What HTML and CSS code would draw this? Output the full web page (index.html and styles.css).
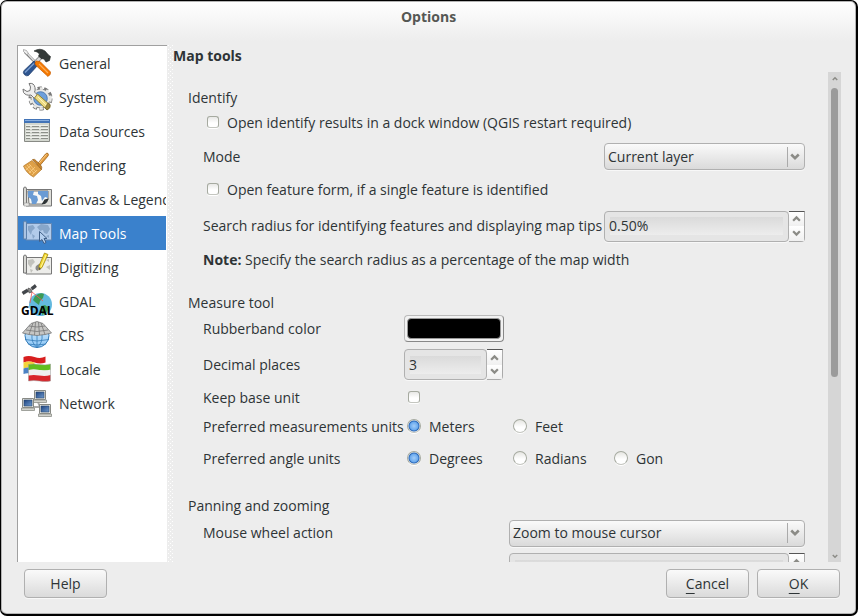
FILE: index.html
```html
<!DOCTYPE html>
<html lang="en">
<head>
<meta charset="utf-8">
<meta name="viewport" content="width=device-width, initial-scale=1">
<title>Options</title>
<link rel="stylesheet" href="styles.css">
</head>
<body>
<svg class="defs" aria-hidden="true">
  <defs>
    <linearGradient id="screen" x1="0" y1="0" x2="1" y2="1"><stop offset="0" stop-color="#1d417c"/><stop offset="1" stop-color="#6f9bd0"/></linearGradient>
    <linearGradient id="globe" x1="0" y1="0" x2="0" y2="1"><stop offset="0" stop-color="#dcf0ff"/><stop offset="1" stop-color="#8cc6f5"/></linearGradient>
    <symbol id="chev-up" viewBox="0 0 8 6"><path d="M1 5l3-3 3 3" fill="none" stroke="#8b8b86" stroke-width="2"/></symbol>
    <symbol id="chev-down" viewBox="0 0 8 6"><path d="M1 1l3 3 3-3" fill="none" stroke="#8b8b86" stroke-width="2"/></symbol>
  </defs>
</svg>
<div class="window">
  <header class="titlebar"><h1>Options</h1></header>
  <div class="body">
    <nav class="sidebar">
      <a class="item" href="#general">
        <svg class="icon" viewBox="0 0 30 30"><path d="M3 4l11 11" stroke="#777" stroke-width="2.600"/><path d="M3 3l11 12" stroke="#dcdcdc" stroke-width="1.600"/><path d="M1.500 1.500l3 1 2 3-2 1-3-3z" fill="#eee" stroke="#888" stroke-width=".6"/><path d="M19 9l-7 7" stroke="#777" stroke-width="4"/><path d="M19 9l-7 7" stroke="#d8d8d8" stroke-width="2.600"/><path d="M12 13l4 4L6.500 27.500q-2 1-4-.8-2-2-.6-4z" fill="#2e5590" stroke="#1d3b68" stroke-width=".7"/><path d="M12 15.500L3 24.500" stroke="#7c9fce" stroke-width="1.500"/><path d="M14 13l4 .5L28.500 24q.5 2.500-2.500 4.500L14 17.500q-2-2 0-4.500z" fill="#f57900" stroke="#c65a00" stroke-width=".7"/><path d="M17 16l9 9" stroke="#ffae58" stroke-width="1.300"/><path d="M12 3q6-3.500 11 0l3.500 4 2 1.500-1 4-3.500 1.500-2-3-3-.5-2.500-2.500 1-2q-2-2.500-5.500-3z" fill="#343a38" stroke="#1d2220" stroke-width=".6"/></svg>
        <span>General</span></a>
      <a class="item" href="#system">
        <svg class="icon" viewBox="0 0 30 30"><circle cx="18.500" cy="16.500" r="10.500" fill="none" stroke="#777" stroke-width="3" stroke-dasharray="4.200 2.400"/><circle cx="18.500" cy="16.500" r="9.500" fill="#e9e9e7" stroke="#888" stroke-width="1"/><circle cx="18.500" cy="16.500" r="10" fill="none" stroke="#e9e9e7" stroke-width="2.600" stroke-dasharray="3.200 3.400"/><circle cx="18.500" cy="16.500" r="6.800" fill="#6d9fdb" stroke="#3d6da8" stroke-width=".8"/><path d="M7 1.500q5-1 6 4 .5 3-.5 4.500l4 4-3.500 3-4-4q-5 1-7.500-2.500l-.500-3.500 4 2.500 3-1 .5-3.500z" fill="#eee" stroke="#777" stroke-width="1"/><path d="M15.500 12l12.500 11q1 3-3 5L12.500 16z" fill="#eddb83" stroke="#8c7a28" stroke-width=".9"/><path d="M16 15l9 9" stroke="#fff4b8"/><path d="M28 22q1 4-3 6l-2-2 3-5z" fill="#9b8539" stroke="#665a30" stroke-width=".6"/></svg>
        <span>System</span></a>
      <a class="item" href="#data-sources">
        <svg class="icon" viewBox="0 0 30 30"><path d="M2.500 3.500h25v22h-25z" fill="#d3d7cf" stroke="#888a85"/><path d="M2 3h26v4H2z" fill="#4374b7"/><path d="M3 4.500h24" stroke="#87aee0"/><path d="M4 9.500h22M4 12.500h22M4 15.500h22M4 18.500h22M4 21.500h22" stroke="#eff0ec"/><path d="M4 10.500h4m2 0h7m2 0h7M4 13.500h4m2 0h7m2 0h7M4 16.500h4m2 0h7m2 0h7M4 19.500h4m2 0h7m2 0h7M4 22.500h4m2 0h7m2 0h7" stroke="#8c8f89"/></svg>
        <span>Data Sources</span></a>
      <a class="item" href="#rendering">
        <svg class="icon" viewBox="0 0 30 30"><path d="M15 14.500L23.500 4q1.500-1.500 2.500-.5t0 2.500L17.500 16z" fill="#e39b3e" stroke="#a0641b" stroke-width=".8"/><path d="M17 13l7.500-8.500" stroke="#ffd28c"/><path d="M10 10.500l9.500 9-8 7.500Q4 23 1.500 16z" fill="#dea047" stroke="#b37524" stroke-width=".7"/><path d="M3 16.500l6 6.500M5 15l7 8M7 14l7 8M4 20l5-5M7 23l6-6M10 25l5-5" stroke="#ffd48c" stroke-width=".7"/><path d="M10.500 9.500q2-1 4 1.500l4 4q2 2 1 4.500z" fill="#c98429" stroke="#95601d" stroke-width=".7"/></svg>
        <span>Rendering</span></a>
      <a class="item" href="#canvas">
        <svg class="icon" viewBox="0 0 30 30"><path d="M4 5.500h25.500v16.500H4z" fill="#deded9" stroke="#777"/><path d="M6 7h20v9l-6 4H7z" fill="#f8f8f6" stroke="#555" stroke-width=".8"/><path d="M6 7h6l-1 4 4 1 1 4-2 4h-4l-1-5-3-2zM16 7h10v7l-3-1-3 4-1-5-3-2z" fill="#6a9bd4"/><path d="M26.500 14.500l-4 1-3 5 3.500-.5q3-2 3.500-5.500z" fill="#2e3436"/><path d="M1.500 5q0-2 1.500-2t1.500 2v16h-3z" fill="#d9d9d5" stroke="#777"/><path d="M2 19h5v3H2z" fill="#e6e6e3" stroke="#999" stroke-width=".6"/></svg>
        <span>Canvas &amp; Legend</span></a>
      <a class="item selected" href="#map-tools" aria-current="page">
        <svg class="icon" viewBox="0 0 30 30"><path d="M4 5.500h25.500v16.500H4z" fill="#b2cbea" stroke="#6386b2"/><path d="M6 8l5-1 2 3-3 3-1 4-3-5zM15 9l4-3 7 1 2 4-3 5-3-1-1-3-3 1zM10 16l3 2-2 3zM24 18l3-1v3z" fill="#88a6c9"/><path d="M1.500 5q0-2 1.500-2t1.500 2v16h-3z" fill="#abc4e3" stroke="#5e82ad"/><path d="M17.500 13.500v10l2.500-2 2 4 2-1-2-4h3z" fill="#b6d0ef" stroke="#405f88" stroke-width="1"/></svg>
        <span>Map Tools</span></a>
      <a class="item" href="#digitizing">
        <svg class="icon" viewBox="0 0 30 30"><path d="M4 5.500h25.500v16.500H4z" fill="#ededea" stroke="#777"/><path d="M6 8l5-1 2 3-3 3-1 3-3-4zM8 17l3 1-2 3zM24 15l4-2v5zM24 8l3-1v3z" fill="#c2c2bd"/><path d="M14 18q-2-4 3-6l3-1-2 4-2 4z" fill="#888"/><path d="M1.500 5q0-2 1.500-2t1.500 2v16h-3z" fill="#d9d9d5" stroke="#777"/><path d="M22.500 1l3.500 1.500-6 13-3 2.500v-4z" fill="#f4da35" stroke="#a48a0c" stroke-width=".8"/><path d="M24 3l-5 12" stroke="#fff49b"/><path d="M17 15v3l2-1z" fill="#555"/></svg>
        <span>Digitizing</span></a>
      <a class="item" href="#gdal">
        <svg class="icon" viewBox="0 0 30 30"><circle cx="18.500" cy="18.500" r="11.500" fill="#64b9df"/><path d="M13 10q5-4 9-2l-1 4-3 3-1 4-4-3-2-2zM19 20l4-1 4 3-3 5-4 2z" fill="#3c9b55"/><path d="M10 6l-2 11M10 6l11 9" stroke="#f05555" stroke-width=".8" fill="none"/><path d="M0 6l5-3 1.500 2.500-5 3zM9 1.500l4-3 1.500 2.500-4 3z" fill="#42474d" stroke="#222" stroke-width=".5"/><path d="M6 2l3 1 1 3-3 1z" fill="#888" stroke="#333" stroke-width=".5"/><text class="icon-text" x="-1" y="29">GDAL</text></svg>
        <span>GDAL</span></a>
      <a class="item" href="#crs">
        <svg class="icon" viewBox="0 0 30 30"><circle cx="15" cy="15.500" r="12" fill="url(#globe)" stroke="#347bb8"/><path d="M15 13v15M10 14q-1 9 5 13.500M20 14q1 9-5 13.500M3 19.500q12 3 24 0M6 24q9 2 18 0" fill="none" stroke="#347bb8" stroke-width=".8"/><path d="M15 1.500l6 2 8.500 9.500-6.500 1.500-8 1-8-1L.5 13 9 3.500z" fill="#c6c6c4" stroke="#777" stroke-width=".8"/><path d="M11 3l-4 11.500M13.500 2l-1 13M16.500 2l1 13M19 3l4 11.500M7 6q8 2 16 0M4 10q11 3 22 0" fill="none" stroke="#777" stroke-width=".8"/></svg>
        <span>CRS</span></a>
      <a class="item" href="#locale">
        <svg class="icon" viewBox="0 0 30 30"><path d="M1.500 3q5-2 11 0t11-.5v6q-5 2-11 0t-11 0z" fill="#d81e1e"/><path d="M1.500 8.500q5-2 11 0v6q-6-2-11 0z" fill="#f4d33a"/><path d="M1.500 14.500q3-1.500 6-1v6q-3-.5-6 .5z" fill="#4c82c4"/><path d="M6.500 10.500q5-1 11 0t11-.5v6q-5 1-11 0t-11 0z" fill="#61bd20"/><path d="M6.500 16q5-1 11 0t11-.5v6q-5 1-11 0t-11 0z" fill="#efefef"/><path d="M6.500 21.500q5-1 11 0t11-.5v6q-5 1-11 0t-11 0z" fill="#d8252a"/><path d="M6.500 10.500q5-1 11 0t11-.5v17q-5 1-11 0t-11 0z" fill="none" stroke="#999" stroke-width=".5"/></svg>
        <span>Locale</span></a>
      <a class="item" href="#network">
        <svg class="icon" viewBox="0 0 30 30"><path d="M11 19h8M16 14l2 5" stroke="#aaa" stroke-width="2"/><g id="monitor"><path d="M12.500 2.500h11v9h-11z" fill="#e2e2dc" stroke="#888a85"/><path d="M14 4h8v6h-8z" fill="url(#screen)" stroke="#29476f" stroke-width=".6"/><path d="M11.500 12h13v2.500h-13z" fill="#d3d3cd" stroke="#8d8f89" stroke-width=".8"/></g><use href="#monitor" x="-12" y="8"/><use href="#monitor" x="5" y="14"/></svg>
        <span>Network</span></a>
    </nav>
    <div class="splitter"></div>
    <main class="page">
      <h2>Map tools</h2>
      <div class="scroll">
        <form class="form">
          <section class="group">
            <h3>Identify</h3>
            <div class="row check-row"><input type="checkbox" id="dock"><label for="dock">Open identify results in a dock window (QGIS restart required)</label></div>
            <div class="row mode-row"><label for="mode">Mode</label><span class="combo"><select id="mode"><option>Current layer</option></select><svg class="chevron"><use href="#chev-down"/></svg></span></div>
            <div class="row check-row"><input type="checkbox" id="single"><label for="single">Open feature form, if a single feature is identified</label></div>
            <div class="row radius-row"><label for="radius">Search radius for identifying features and displaying map tips</label>
              <span class="spin"><input type="text" id="radius" value="0.50%"><span class="steps"><button type="button" aria-label="Increase"><svg><use href="#chev-up"/></svg></button><button type="button" aria-label="Decrease"><svg><use href="#chev-down"/></svg></button></span></span></div>
            <p class="row note"><strong>Note:</strong>&nbsp;Specify the search radius as a percentage of the map width</p>
          </section>
          <section class="group measure">
            <h3>Measure tool</h3>
            <div class="row color-row"><label class="name" for="rubber">Rubberband color</label><button type="button" id="rubber" class="swatch"><span></span></button></div>
            <div class="row decimal-row"><label class="name" for="places">Decimal places</label>
              <span class="spin"><input type="text" id="places" value="3"><span class="steps"><button type="button" aria-label="Increase"><svg><use href="#chev-up"/></svg></button><button type="button" aria-label="Decrease"><svg><use href="#chev-down"/></svg></button></span></span></div>
            <div class="row keep-row"><label class="name" for="keep">Keep base unit</label><input type="checkbox" id="keep"></div>
            <div class="row" role="radiogroup" aria-labelledby="units"><span class="name" id="units">Preferred measurements units</span>
              <span class="choice"><input type="radio" name="unit" id="meters" checked><label for="meters">Meters</label></span>
              <span class="choice"><input type="radio" name="unit" id="feet"><label for="feet">Feet</label></span></div>
            <div class="row" role="radiogroup" aria-labelledby="angles"><span class="name" id="angles">Preferred angle units</span>
              <span class="choice"><input type="radio" name="angle" id="degrees" checked><label for="degrees">Degrees</label></span>
              <span class="choice"><input type="radio" name="angle" id="radians"><label for="radians">Radians</label></span>
              <span class="choice"><input type="radio" name="angle" id="gon"><label for="gon">Gon</label></span></div>
          </section>
          <section class="group zooming">
            <h3>Panning and zooming</h3>
            <div class="row"><label for="wheel">Mouse wheel action</label><span class="combo"><select id="wheel"><option>Zoom to mouse cursor</option></select><svg class="chevron"><use href="#chev-down"/></svg></span></div>
            <div class="row factor-row"><span class="spin"><input type="text" aria-label="Zoom factor"><span class="steps"><button type="button" aria-label="Increase"><svg><use href="#chev-up"/></svg></button><button type="button" aria-label="Decrease"><svg><use href="#chev-down"/></svg></button></span></span></div>
          </section>
        </form>
        <div class="scrollbar"><svg><use href="#chev-up"/></svg><div class="track"><div class="thumb"></div></div><svg><use href="#chev-down"/></svg></div>
      </div>
    </main>
  </div>
  <footer class="actions">
    <button type="button" class="push">Help</button>
    <span class="spacer"></span>
    <button type="button" class="push"><u>C</u>ancel</button>
    <button type="button" class="push"><u>O</u>K</button>
  </footer>
</div>
</body>
</html>
```
FILE: styles.css
```css
* { box-sizing: border-box; }
body {
  margin: 0;
  background: #fff;
  color: #2e3436;
  font: 14px/20px "Open Sans", "Noto Sans", sans-serif;
}
h1, h2, h3, p { margin: 0; font-size: inherit; }
input, select, button { font: inherit; color: inherit; margin: 0; }
.defs { position: absolute; width: 0; height: 0; }

.window {
  display: flex;
  flex-direction: column;
  height: 100vh;
  border: 2px solid #000;
  border-top-width: 1px;
  border-left-width: 1px;
  border-radius: 7px;
  background: linear-gradient(#fff, #ededed 40px);
  box-shadow: inset 0 0 0 1px #b4b4b4;
}
.titlebar { height: 44px; padding-top: 6px; text-align: center; color: #555753; }
.body { display: flex; flex: 1; min-height: 0; }

.sidebar {
  width: 150px;
  margin-left: 16px;
  padding-right: 1px;
  border: solid #a0a0a0;
  border-width: 1px 0 0 1px;
  background: #fff;
  overflow: hidden;
}
.item {
  display: flex;
  align-items: center;
  gap: 7px;
  height: 34px;
  padding-left: 4px;
  color: inherit;
  text-decoration: none;
  white-space: nowrap;
  overflow: hidden;
}
.item span { padding-top: 2px; }
.selected { background: #3a81cc; color: #fff; }
.icon { flex: none; width: 30px; height: 30px; overflow: visible; }
.icon-text { font: bold 12px "Open Sans", sans-serif; }
.splitter {
  width: 5px;
  margin-left: 1px;
  background:
    conic-gradient(from 270deg at 1px 1px, #fff 90deg, transparent 0) 0 0 / 4px 4px,
    conic-gradient(from 270deg at 1px 1px, #fff 90deg, transparent 0) 2px 2px / 4px 4px;
}

.page { display: flex; flex-direction: column; flex: 1; min-width: 0; margin-right: 15px; }
.page h2 { height: 27px; padding-top: 1px; }
.scroll { display: flex; flex: 1; min-height: 0; overflow: hidden; }
.form { flex: 1; min-width: 0; padding: 16px 23px 0 15px; }
.group { margin-bottom: 21px; }
.group h3 { height: 20px; font-weight: normal; }
.row { display: flex; align-items: center; height: 32px; padding-left: 15px; white-space: nowrap; }
.check-row { height: 30px; gap: 8px; padding-left: 19px; }
.mode-row { height: 37px; justify-content: space-between; }
.radius-row { height: 42px; justify-content: space-between; }
.radius-row label { min-width: 0; }
.note { height: 25px; }
.color-row { height: 31px; }
.decimal-row { height: 41px; }
.keep-row { height: 26px; }
.zooming .row { height: 34px; justify-content: space-between; }
.zooming .factor-row { height: 37px; justify-content: flex-end; }
.name { flex: none; width: 201px; }
.choice { display: flex; align-items: center; gap: 8px; width: 106px; padding-left: 3px; }
.choice + .choice { width: 101px; }

input[type="checkbox"] {
  appearance: none;
  width: 12px;
  height: 12px;
  margin-bottom: 3px;
  border: 1px solid #a6aaa0;
  border-bottom-color: #c4c6c0;
  border-radius: 3px;
  background: linear-gradient(#e8e8e6, #fff 60%);
  box-shadow: 0 1px 0 #fff;
}
.keep-row input { margin-left: 4px; }
input[type="radio"] {
  appearance: none;
  width: 14px;
  height: 14px;
  margin-bottom: 3px;
  border: 1px solid #a6aaa0;
  border-bottom-color: #c4c6c0;
  border-radius: 50%;
  background: linear-gradient(#e6e6e2, #fff 60%);
  box-shadow: 0 1px 0 #fff;
}
input[type="radio"]:checked {
  background: radial-gradient(circle at 50% 50%, #a3cdf8 0, #69a9ee 4px, #2764b4 5px, #eef3f8 6px);
}

.combo { display: grid; align-items: center; flex: none; width: 201px; }
.zooming .combo, .zooming .spin { width: 296px; }
.combo select {
  grid-area: 1 / 1;
  appearance: none;
  width: 100%;
  height: 27px;
  padding: 0 24px 0 3px;
  border: 1px solid #b0b0b0;
  border-radius: 4px;
  background:
    linear-gradient(#aaa, #aaa) calc(100% - 16px) 50% / 1px 20px no-repeat,
    linear-gradient(#fafafa, #dadada);
  box-shadow: 0 1px 0 #f8f8f8;
}
.chevron { grid-area: 1 / 1; justify-self: end; width: 10px; height: 8px; margin-right: 5px; pointer-events: none; }

.spin { display: flex; flex: none; width: 201px; height: 31px; }
.measure .spin { width: 99px; }
.spin input {
  flex: 1;
  min-width: 0;
  padding: 0 4px;
  border: 1px solid #b0b0b0;
  border-radius: 4px;
  background: linear-gradient(#dadada, #ededed) 50% 50% / calc(100% - 10px) 18px no-repeat, #e5e5e5;
  box-shadow: 0 1px 0 #f8f8f8;
}
.steps {
  display: flex;
  flex-direction: column;
  width: 16px;
  border: solid #aaa;
  border-width: 1px 1px 1px 0;
  border-top-color: #555;
  border-radius: 0 0 4px 0;
  background: #fff;
}
.steps button { display: grid; place-items: center; flex: 1; padding: 0; border: 0; background: linear-gradient(#fff, #f0f0f0); }
.steps svg { width: 9px; height: 7px; }
.swatch { width: 100px; height: 27px; padding: 2px; border: 1px solid #888; border-top-color: #bbb; border-left-color: #bbb; border-radius: 4px; background: #f2f2f2; }
.swatch span { display: block; height: 21px; border: 1px solid #999; border-radius: 4px; background: #000; }

.scrollbar { display: flex; flex-direction: column; align-items: center; justify-content: space-between; width: 13px; padding: 4px 0 3px; background: #d6d6d6; }
.scrollbar svg { flex: none; width: 6px; height: 5px; }
.track { flex: 1; width: 7px; padding: 7px 0; }
.thumb { height: 63%; border-radius: 4px; background: #9b9b9b; }

.actions { display: flex; gap: 8px; padding: 7px 16px 16px 23px; }
.spacer { flex: 1; }
.push {
  width: 83px;
  height: 29px;
  padding: 1px 0 0;
  border: 1px solid #b0b0b0;
  border-radius: 4px;
  background: linear-gradient(#fafafa, #dadada);
  box-shadow: 0 1px 0 #f8f8f8;
}
.push u { text-underline-offset: 4px; text-decoration-thickness: 1px; text-decoration-skip-ink: none; }
```
